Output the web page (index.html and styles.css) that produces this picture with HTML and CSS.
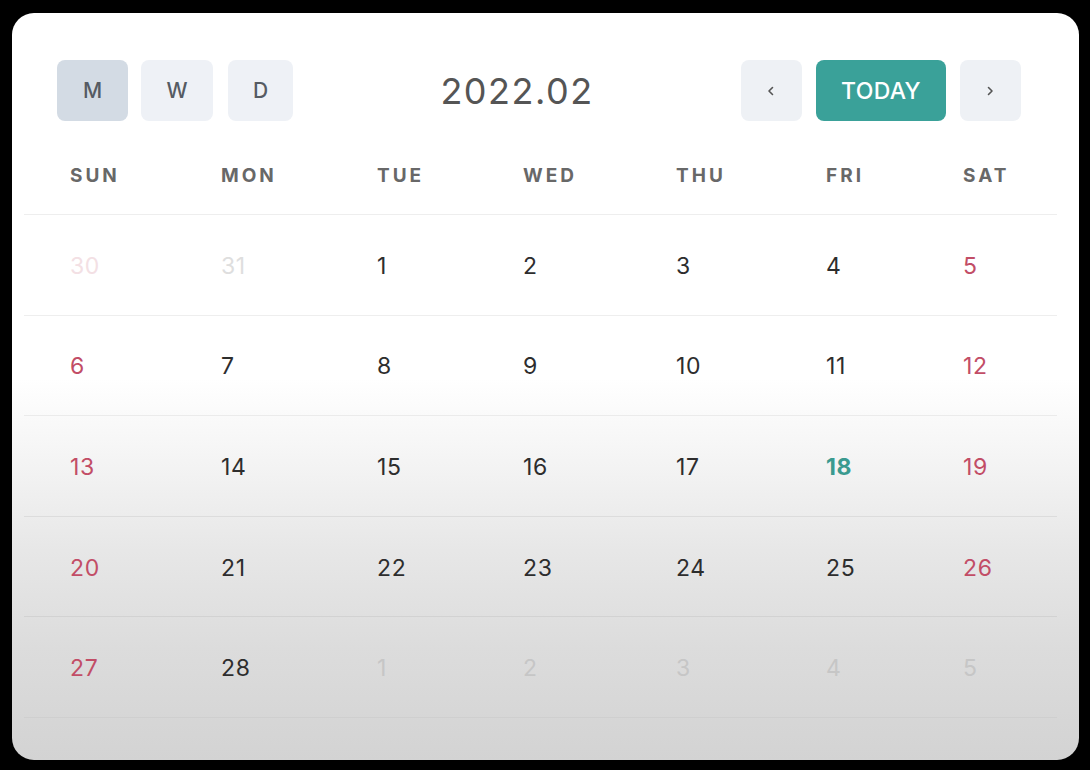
FILE: index.html
```html
<!DOCTYPE html>
<html>
<head>
<meta charset="utf-8">
<link rel="stylesheet" href="styles.css">
</head>
<body>
<div class="card">
  <div class="header">
    <div class="views">
      <button class="btn view active">M</button>
      <button class="btn view">W</button>
      <button class="btn view">D</button>
    </div>
    <div class="title">2022.02</div>
    <div class="nav">
      <button class="btn arrow"><svg width="12" height="12" viewBox="0 0 12 12"><path d="M7.5 2.5 L4 6 L7.5 9.5" fill="none" stroke="#555" stroke-width="1.6" stroke-linecap="round" stroke-linejoin="round"/></svg></button>
      <button class="btn today">TODAY</button>
      <button class="btn arrow"><svg width="12" height="12" viewBox="0 0 12 12"><path d="M4.5 2.5 L8 6 L4.5 9.5" fill="none" stroke="#555" stroke-width="1.6" stroke-linecap="round" stroke-linejoin="round"/></svg></button>
    </div>
  </div>
  <div class="table">
    <div class="row weekdays">
      <div class="cell">SUN</div><div class="cell">MON</div><div class="cell">TUE</div><div class="cell">WED</div><div class="cell">THU</div><div class="cell">FRI</div><div class="cell">SAT</div>
    </div>
    <div class="row days">
      <div class="cell sun other">30</div><div class="cell other">31</div><div class="cell">1</div><div class="cell">2</div><div class="cell">3</div><div class="cell">4</div><div class="cell sat">5</div>
    </div>
    <div class="row days">
      <div class="cell sun">6</div><div class="cell">7</div><div class="cell">8</div><div class="cell">9</div><div class="cell">10</div><div class="cell">11</div><div class="cell sat">12</div>
    </div>
    <div class="row days">
      <div class="cell sun">13</div><div class="cell">14</div><div class="cell">15</div><div class="cell">16</div><div class="cell">17</div><div class="cell today-date">18</div><div class="cell sat">19</div>
    </div>
    <div class="row days">
      <div class="cell sun">20</div><div class="cell">21</div><div class="cell">22</div><div class="cell">23</div><div class="cell">24</div><div class="cell">25</div><div class="cell sat">26</div>
    </div>
    <div class="row days last">
      <div class="cell sun">27</div><div class="cell">28</div><div class="cell other">1</div><div class="cell other">2</div><div class="cell other">3</div><div class="cell other">4</div><div class="cell other">5</div>
    </div>
  </div>
</div>
</body>
</html>
```
FILE: styles.css
```css
html, body {
  margin: 0;
  padding: 0;
  background: #000;
}
body {
  width: 1090px;
  height: 770px;
  overflow: hidden;
  font-family: Inter, "Noto Sans", sans-serif;
}
.card {
  box-sizing: border-box;
  margin: 13px 11px 0 12px;
  width: 1067px;
  height: 747px;
  border-radius: 22px;
  background: linear-gradient(to bottom, #ffffff 0%, #ffffff 49%, #f4f4f4 60%, #e7e7e7 72%, #dcdcdc 85%, #d3d3d3 100%);
  padding-top: 47px;
  overflow: hidden;
}
.header {
  display: flex;
  align-items: center;
  justify-content: space-between;
  margin: 0 58px 0 45px;
  height: 61px;
}
.views {
  display: flex;
  gap: 13px;
}
.nav {
  display: flex;
  gap: 14px;
}
.btn {
  border: none;
  border-radius: 8px;
  height: 61px;
  font-family: Inter, "Noto Sans", sans-serif;
  display: flex;
  align-items: center;
  justify-content: center;
  padding: 0;
}
.view {
  background: #eef1f6;
  color: #555b63;
  font-size: 21px;
  font-weight: 500;
  width: 72px;
}
.view.active {
  background: #d3dbe4;
  width: 71px;
}
.view:last-child {
  width: 65px;
  margin-left: 2px;
}
.title {
  font-size: 36px;
  color: #555;
  letter-spacing: 1.5px;
  font-weight: 400;
}
.arrow {
  width: 61px;
  background: #eef1f5;
}
.today {
  width: 130px;
  background: #3aa199;
  color: #fff;
  font-size: 23px;
  font-weight: 500;
  letter-spacing: 0.3px;
}
.table {
  margin: 15px 22px 0 12px;
}
.row {
  display: grid;
  grid-template-columns: 151px 156px 146px 153px 150px 137px 139px;
}
.cell {
  padding-left: 46px;
  display: flex;
  align-items: center;
}
.weekdays {
  height: 78px;
  font-size: 19px;
  font-weight: 700;
  letter-spacing: 3px;
  color: #686868;
}
.days {
  border-top: 1px solid #eeeeee;
  height: 99.6px;
  font-size: 23px;
  font-weight: 400;
  letter-spacing: 0.6px;
  color: #2d2d2d;
}
.days .cell {
  padding-top: 2px;
}
.days.last {
  border-bottom: 1px solid #cfcfcf;
}
.days:nth-child(4) { border-top-color: #ebebeb; }
.days:nth-child(5) { border-top-color: #dcdcdc; }
.days:nth-child(6) { border-top-color: #d2d2d2; }
.sun, .sat {
  color: #c24d66;
}
.other {
  color: #dedede;
}
.sun.other {
  color: #f3e0e4;
}
.last .other {
  color: #c6c6c6;
}
.today-date {
  color: #3a9a8f;
  font-weight: 700;
}
```
